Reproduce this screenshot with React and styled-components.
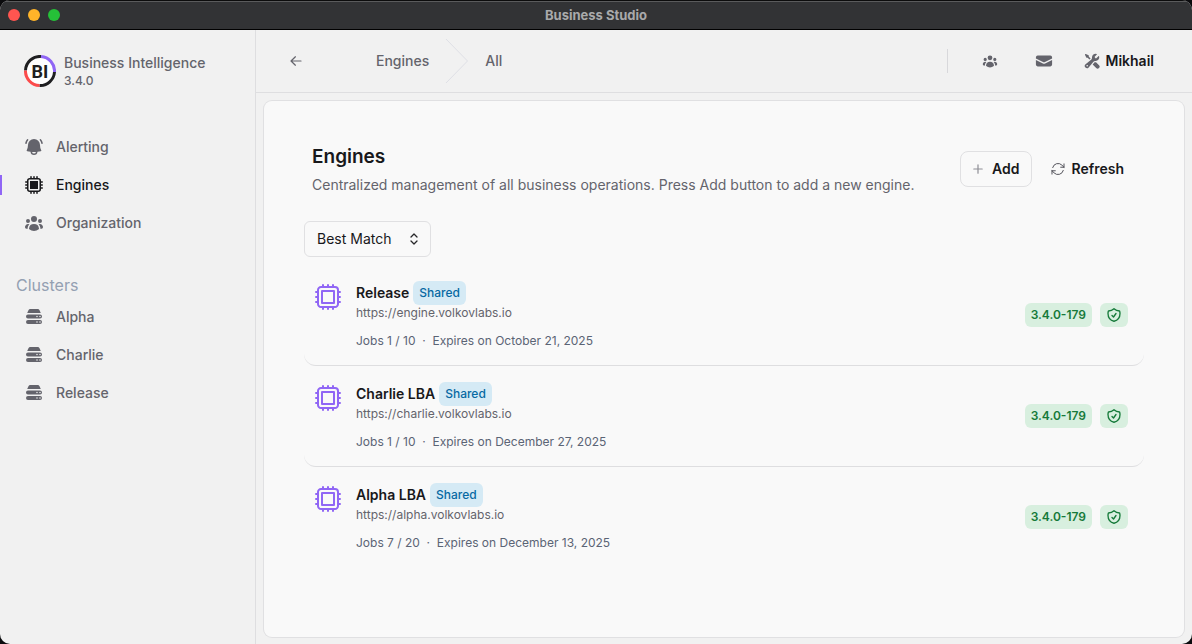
import React from "react";
import styled, { createGlobalStyle, css } from "styled-components";
import {
  HiMiniBellAlert,
  HiMiniCpuChip,
  HiMiniServerStack,
  HiOutlineCpuChip,
  HiOutlineShieldCheck,
  HiOutlineArrowPath,
  HiMiniArrowLeft,
  HiMiniUserGroup,
  HiMiniEnvelope,
  HiMiniPlus,
  HiMiniWrenchScrewdriver,
} from "react-icons/hi2";

const GlobalStyle = createGlobalStyle`
  *, *::before, *::after { box-sizing: border-box; }
  body {
    margin: 0;
    background: #0b0b0d;
    color: #18181b;
    font-family: Inter, "Liberation Sans", sans-serif;
    font-size: 14px;
    line-height: 20px;
  }
  h1, h2, p, ul { margin: 0; padding: 0; }
  ul { list-style: none; }
  svg { display: block; flex: none; }
`;

const Window = styled.div`
  display: flex;
  flex-direction: column;
  min-height: 100vh;
  border-radius: 10px;
  overflow: hidden;
  background: #f1f1f1;
`;

const TitleBar = styled.div`
  display: grid;
  grid-template-columns: 1fr auto 1fr;
  align-items: center;
  height: 30px;
  padding: 0 8px;
  background: #323335;
  border-top: 1px solid #0c0c0c;
  border-bottom: 1px solid #000;
  box-shadow: inset 0 1px 0 #5a5b5c;
`;

const Lights = styled.div`
  display: flex;
  gap: 8px;
`;

const Light = styled.span`
  width: 12px;
  height: 12px;
  border-radius: 50%;
  background: ${(p) => p.$color};
`;

const WindowTitle = styled.span`
  font-size: 13px;
  font-weight: 700;
  line-height: 16px;
  color: #a9aaab;
`;

const Body = styled.div`
  display: flex;
  flex: 1;
`;

const Sidebar = styled.aside`
  width: 256px;
  flex: none;
  border-right: 1px solid #dedee0;
  padding-top: 23px;
`;

const Brand = styled.div`
  display: flex;
  align-items: center;
  gap: 8px;
  padding: 0 24px;
`;

const BrandName = styled.div`
  font-weight: 500;
  line-height: 20px;
  color: #64646c;
`;

const BrandVersion = styled.div`
  font-size: 12px;
  font-weight: 500;
  line-height: 16px;
  color: #64646c;
`;

const Nav = styled.nav`
  display: flex;
  flex-direction: column;
  gap: 32px;
  padding-top: 40px;
`;

const NavList = styled.ul`
  display: flex;
  flex-direction: column;
  gap: 2px;
`;

const NavHeading = styled.h2`
  padding: 0 16px;
  margin-bottom: 2px;
  font-size: 16px;
  font-weight: 400;
  line-height: 24px;
  color: #94a0b2;
`;

const NavLink = styled.a`
  position: relative;
  display: flex;
  align-items: center;
  gap: 12px;
  height: 36px;
  padding: 0 24px;
  font-weight: 500;
  color: #64646c;
  text-decoration: none;

  ${(p) =>
    p.$active &&
    css`
      color: #18181b;
      &::before {
        content: "";
        position: absolute;
        left: 0;
        top: 8px;
        bottom: 8px;
        width: 2px;
        background: #9066f5;
      }
    `}
`;

const Main = styled.div`
  display: flex;
  flex-direction: column;
  flex: 1;
  min-width: 0;
`;

const Header = styled.header`
  display: flex;
  align-items: center;
  height: 63px;
  padding: 0 32px;
  border-bottom: 1px solid #dedee0;
`;

const IconButton = styled.button`
  display: flex;
  align-items: center;
  justify-content: center;
  width: 38px;
  height: 36px;
  padding: 0;
  border: 0;
  background: none;
  color: #64646c;
`;

const BackButton = styled(IconButton)`
  width: 16px;
`;

const Breadcrumbs = styled.nav`
  display: flex;
  align-items: center;
  gap: 16px;
  margin-left: 72px;
`;

const Crumb = styled.a`
  font-weight: 500;
  color: #64646c;
  text-decoration: none;
`;

const HeaderActions = styled.div`
  display: flex;
  align-items: center;
  gap: 16px;
  margin-left: auto;
  padding-right: 6px;
`;

const Divider = styled.span`
  width: 1px;
  height: 24px;
  margin-right: 7px;
  background: #d8d8db;
`;

const UserButton = styled.button`
  display: flex;
  align-items: center;
  gap: 6px;
  height: 36px;
  padding: 0;
  margin-left: 5px;
  border: 0;
  background: none;
  font: inherit;
  font-weight: 600;
  color: #18181b;
  svg { color: #64646c; }
`;

const Content = styled.main`
  display: flex;
  flex: 1;
  padding: 8px 8px 7px;
`;

const Card = styled.section`
  flex: 1;
  min-width: 0;
  padding: 40px;
  border-radius: 8px;
  background: #f9f9f9;
  box-shadow: 0 0 0 1px #e0e0e2;
`;

const PageHead = styled.div`
  display: flex;
  justify-content: space-between;
  align-items: center;
  padding: 0 8px;
  min-height: 56px;
`;

const PageTitle = styled.h1`
  font-size: 19px;
  font-weight: 600;
  line-height: 32px;
`;

const PageText = styled.p`
  line-height: 24px;
  color: #64646c;
`;

const Buttons = styled.div`
  display: flex;
  gap: 8px;
`;

const Button = styled.button`
  display: flex;
  align-items: center;
  gap: 6px;
  height: 36px;
  padding: 0 11px 0 9px;
  border: 1px solid ${(p) => (p.$outlined ? "#e0e0e2" : "transparent")};
  border-radius: 8px;
  background: none;
  font: inherit;
  font-weight: 600;
  color: #18181b;
  svg { color: ${(p) => (p.$outlined ? "#8e8e95" : "#54545c")}; }
`;

const SelectBox = styled.div`
  display: inline-grid;
  align-items: center;
  margin-top: 24px;
  > * { grid-area: 1 / 1; }
  svg {
    justify-self: end;
    margin-right: 9px;
    pointer-events: none;
  }
`;

const Select = styled.select`
  appearance: none;
  width: 127px;
  height: 36px;
  padding: 0 12px;
  border: 1px solid #e0e0e2;
  border-radius: 6px;
  background: transparent;
  font: inherit;
  color: #18181b;
`;

const EngineList = styled.ul`
  margin-top: 8px;
`;

const EngineRow = styled.li`
  display: flex;
  align-items: center;
  gap: 12px;
  padding: 16px 16px 16px 8px;
  border-radius: 12px;
  border-bottom: 1px solid #dedee0;
  &:last-child { border-bottom-color: transparent; }
`;

const EngineIcon = styled.span`
  align-self: flex-start;
  color: #9066f5;
`;

const EngineInfo = styled.div`
  flex: 1;
  min-width: 0;
  font-size: 12px;
  line-height: 16px;
`;

const EngineTitle = styled.div`
  display: flex;
  align-items: center;
  gap: 4px;
  height: 24px;
`;

const EngineName = styled.h2`
  font-size: 14px;
  font-weight: 600;
  line-height: 20px;
`;

const Badge = styled.span`
  display: inline-flex;
  align-items: center;
  justify-content: center;
  height: 24px;
  padding: 0 6px;
  border-radius: 6px;
  font-size: 12px;
  font-weight: ${(p) => (p.$green ? 600 : 500)};
  line-height: 16px;
  color: ${(p) => (p.$green ? "#167a3a" : "#0769a3")};
  background: ${(p) => (p.$green ? "#d8efdf" : "#d5eaf5")};
  svg { stroke-width: 2; }
`;

const EngineUrl = styled.p`
  color: #64646c;
`;

const EngineMeta = styled.p`
  margin-top: 12px;
  color: #5b6475;
  white-space: pre;
`;

const Badges = styled.div`
  display: flex;
  gap: 8px;
`;

const Logo = () => (
  <svg width="32" height="32" viewBox="0 0 32 32" role="img" aria-label="BI">
    <circle cx="16" cy="16" r="14.5" fill="#fff" />
    <g fill="none" strokeWidth="3">
      <path d="M1.5 15.5A14.5 14.5 0 0 1 17 1.5" stroke="#1f1f21" />
      <path d="M17 1.5A14.5 14.5 0 0 1 30.5 17" stroke="#9066f5" />
      <path d="M30.5 17A14.5 14.5 0 0 1 15.5 30.5" stroke="#1f1f21" />
      <path d="M15.5 30.5A14.5 14.5 0 0 1 1.5 15.5" stroke="#fb4b4b" />
    </g>
    <text
      x="16"
      y="23"
      textAnchor="middle"
      fontFamily="Roboto, sans-serif"
      fontSize="18"
      fontWeight="700"
      fill="#1f1f21"
    >
      BI
    </text>
  </svg>
);

const CrumbArrow = () => (
  <svg width="24" height="46" viewBox="0 0 24 46" fill="none" aria-hidden="true">
    <path d="M1 1L22.500 23L1 45" stroke="#dfe0e6" />
  </svg>
);

const SelectArrows = () => (
  <svg width="16" height="16" viewBox="0 0 16 16" fill="none" stroke="#27272a" strokeWidth="1.3" strokeLinecap="round" strokeLinejoin="round" aria-hidden="true">
    <path d="M5 6L8 3L11 6M5 10L8 13L11 10" />
  </svg>
);

const sections = [
  { label: "Alerting", Icon: HiMiniBellAlert },
  { label: "Engines", Icon: HiMiniCpuChip, active: true },
  { label: "Organization", Icon: HiMiniUserGroup },
];

const clusters = ["Alpha", "Charlie", "Release"];

const engines = [
  { name: "Release", url: "https://engine.volkovlabs.io", jobs: "1 / 10", expires: "October 21, 2025" },
  { name: "Charlie LBA", url: "https://charlie.volkovlabs.io", jobs: "1 / 10", expires: "December 27, 2025" },
  { name: "Alpha LBA", url: "https://alpha.volkovlabs.io", jobs: "7 / 20", expires: "December 13, 2025" },
];

export default function App() {
  return (
    <>
      <GlobalStyle />
      <Window>
        <TitleBar>
          <Lights>
            <Light $color="#ff5550" />
            <Light $color="#ffb429" />
            <Light $color="#25c138" />
          </Lights>
          <WindowTitle>Business Studio</WindowTitle>
        </TitleBar>
        <Body>
          <Sidebar>
            <Brand>
              <Logo />
              <div>
                <BrandName>Business Intelligence</BrandName>
                <BrandVersion>3.4.0</BrandVersion>
              </div>
            </Brand>
            <Nav>
              <NavList>
                {sections.map(({ label, Icon, active }) => (
                  <li key={label}>
                    <NavLink href="#" $active={active}>
                      <Icon size={20} />
                      {label}
                    </NavLink>
                  </li>
                ))}
              </NavList>
              <div>
                <NavHeading>Clusters</NavHeading>
                <NavList>
                  {clusters.map((label) => (
                    <li key={label}>
                      <NavLink href="#">
                        <HiMiniServerStack size={20} />
                        {label}
                      </NavLink>
                    </li>
                  ))}
                </NavList>
              </div>
            </Nav>
          </Sidebar>
          <Main>
            <Header>
              <BackButton aria-label="Back">
                <HiMiniArrowLeft size={16} />
              </BackButton>
              <Breadcrumbs>
                <Crumb href="#">Engines</Crumb>
                <CrumbArrow />
                <Crumb href="#">All</Crumb>
              </Breadcrumbs>
              <HeaderActions>
                <Divider />
                <IconButton aria-label="Organization">
                  <HiMiniUserGroup size={16} />
                </IconButton>
                <IconButton aria-label="Messages">
                  <HiMiniEnvelope size={18} />
                </IconButton>
                <UserButton>
                  <HiMiniWrenchScrewdriver size={16} />
                  Mikhail
                </UserButton>
              </HeaderActions>
            </Header>
            <Content>
              <Card>
                <PageHead>
                  <div>
                    <PageTitle>Engines</PageTitle>
                    <PageText>
                      Centralized management of all business operations. Press Add button to add a new engine.
                    </PageText>
                  </div>
                  <Buttons>
                    <Button $outlined>
                      <HiMiniPlus size={16} />
                      Add
                    </Button>
                    <Button>
                      <HiOutlineArrowPath size={16} />
                      Refresh
                    </Button>
                  </Buttons>
                </PageHead>
                <SelectBox>
                  <Select aria-label="Sort by">
                    <option>Best Match</option>
                  </Select>
                  <SelectArrows />
                </SelectBox>
                <EngineList>
                  {engines.map((e) => (
                    <EngineRow key={e.name}>
                      <EngineIcon>
                        <HiOutlineCpuChip size={32} />
                      </EngineIcon>
                      <EngineInfo>
                        <EngineTitle>
                          <EngineName>{e.name}</EngineName>
                          <Badge>Shared</Badge>
                        </EngineTitle>
                        <EngineUrl>{e.url}</EngineUrl>
                        <EngineMeta>{`Jobs ${e.jobs}  ·  Expires on ${e.expires}`}</EngineMeta>
                      </EngineInfo>
                      <Badges>
                        <Badge $green>3.4.0-179</Badge>
                        <Badge $green>
                          <HiOutlineShieldCheck size={16} />
                        </Badge>
                      </Badges>
                    </EngineRow>
                  ))}
                </EngineList>
              </Card>
            </Content>
          </Main>
        </Body>
      </Window>
    </>
  );
}
